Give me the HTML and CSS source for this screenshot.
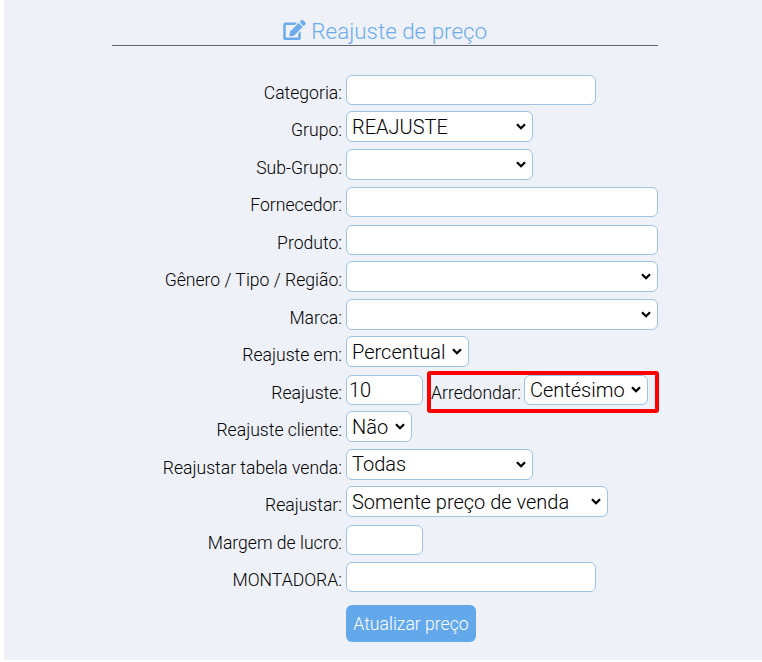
FILE: index.html
```html
<!DOCTYPE html>
<html lang="pt-BR">
<head>
<meta charset="UTF-8">
<title>Reajuste de preço</title>
<link rel="stylesheet" href="styles.css">
</head>
<body>

<div class="panel">
    <h2 class="title">
        <svg class="title-icon" viewBox="0 0 576 512"><path d="M402.6 83.2l90.2 90.2c3.8 3.8 3.8 10 0 13.8L274.4 405.6l-92.8 10.3c-12.4 1.4-22.9-9.1-21.5-21.5l10.3-92.8L388.8 83.2c3.8-3.8 10-3.8 13.8 0zm162-22.9l-48.8-48.8c-15.2-15.2-39.9-15.2-55.2 0l-35.4 35.4c-3.8 3.8-3.8 10 0 13.8l90.2 90.2c3.8 3.8 10 3.8 13.8 0l35.4-35.4c15.2-15.3 15.2-40 0-55.2zM384 346.2V448H64V128h229.8c3.2 0 6.2-1.3 8.5-3.5l40-40c7.6-7.6 2.2-20.5-8.5-20.5H48C21.5 64 0 85.5 0 112v352c0 26.5 21.5 48 48 48h352c26.5 0 48-21.5 48-48V306.2c0-10.7-12.9-16-20.5-8.5l-40 40c-2.2 2.3-3.5 5.3-3.5 8.5z"/></svg>
        Reajuste de preço
    </h2>

    <form class="form">
        <label>Categoria:</label>
        <div><input class="w250" type="text"></div>

        <label>Grupo:</label>
        <div><select class="w187"><option>REAJUSTE</option></select></div>

        <label>Sub-Grupo:</label>
        <div><select class="w187"><option></option></select></div>

        <label>Fornecedor:</label>
        <div><input class="w312" type="text"></div>

        <label>Produto:</label>
        <div><input class="w312" type="text"></div>

        <label>Gênero / Tipo / Região:</label>
        <div><select class="w312"><option></option></select></div>

        <label>Marca:</label>
        <div><select class="w312"><option></option></select></div>

        <label>Reajuste em:</label>
        <div><select><option>Percentual</option></select></div>

        <label>Reajuste:</label>
        <div class="inline">
            <input class="w77" type="text" value="10">
            <div class="highlight">
                <label>Arredondar:</label>
                <select><option>Centésimo</option></select>
            </div>
        </div>

        <label>Reajuste cliente:</label>
        <div><select><option>Não</option></select></div>

        <label>Reajustar tabela venda:</label>
        <div><select class="w187"><option>Todas</option></select></div>

        <label>Reajustar:</label>
        <div><select class="w262"><option>Somente preço de venda</option></select></div>

        <label>Margem de lucro:</label>
        <div><input class="w77" type="text"></div>

        <label>MONTADORA:</label>
        <div><input class="w250" type="text"></div>

        <span></span>
        <div class="actions"><button type="button">Atualizar preço</button></div>
    </form>
</div>

</body>
</html>
```

FILE: styles.css
```css
html, body {
    margin: 0;
    background: #fff;
}

body {
    height: 662px;
    overflow: hidden;
    font-family: 'Roboto', sans-serif;
    color: #000;
}

.panel {
    margin-left: 4px;
    height: 660px;
    background: #eef1f7;
    padding: 18px 104px 0 108px;
    box-sizing: border-box;
}

.title {
    margin: 0 0 29px;
    height: 27px;
    border-bottom: 1px solid #666;
    text-align: center;
    font-size: 22.4px;
    font-weight: 300;
    line-height: 26px;
    color: #6cacec;
}

.title-icon {
    width: 23px;
    height: 20px;
    fill: #6cacec;
    vertical-align: -1px;
}

/* Formulario */
.form {
    display: grid;
    grid-template-columns: 230px 1fr;
    grid-auto-rows: 31px;
    column-gap: 4px;
    row-gap: 6.48px;
    align-items: start;
}

label {
    font-size: 17.6px;
    font-weight: 300;
    line-height: 20px;
    padding-top: 8px;
    text-align: right;
    color: #000;
}

input, select {
    box-sizing: border-box;
    display: block;
    height: 30px;
    border: 1px solid #9dc3e6;
    border-radius: 6px;
    background-color: #fff;
    font-family: 'Roboto', sans-serif;
    font-size: 20px;
    font-weight: 300;
    color: #000;
    padding: 0 2px;
}

select {
    appearance: none;
    height: 31px;
    margin-top: -1px;
    padding: 0 22px 0 5px;
    background-image: url("data:image/svg+xml,%3Csvg xmlns='http://www.w3.org/2000/svg' width='10' height='7' viewBox='0 0 10 7'%3E%3Cpath d='M1 1.2l4 4 4-4' fill='none' stroke='%23000' stroke-width='2.3'/%3E%3C/svg%3E");
    background-repeat: no-repeat;
    background-position: right 6px center;
}

.w77 { width: 77px; }
.w187 { width: 187px; }
.w250 { width: 250px; }
.w262 { width: 262px; }
.w312 { width: 312px; }

.inline {
    display: flex;
    gap: 4px;
}

.highlight {
    display: flex;
    gap: 3px;
    border: 4px solid #f00;
    border-radius: 3px;
    height: 42px;
    box-sizing: border-box;
    margin-top: -4px;
    padding: 0 7px 0 0;
}

.highlight select {
    height: 30px;
    margin-top: 0;
}

.actions {
    padding-top: 5px;
}

button {
    height: 37px;
    width: 130px;
    border: none;
    border-radius: 6px;
    background: #64a8ec;
    color: #fff;
    font-family: 'Roboto', sans-serif;
    font-size: 17.6px;
    font-weight: 300;
    padding: 1px 0 0;
}
```
